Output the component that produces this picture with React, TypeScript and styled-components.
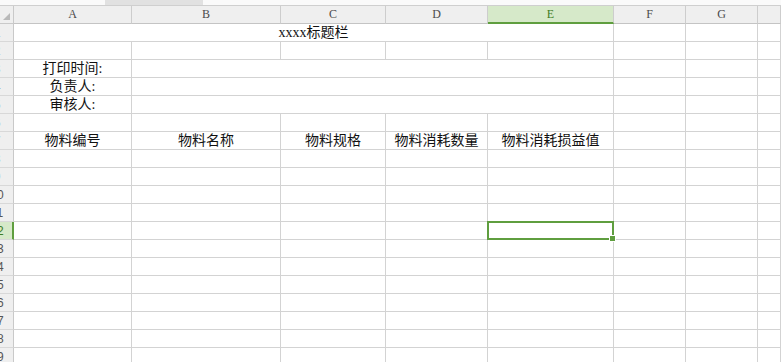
import styled, { createGlobalStyle, css } from "styled-components";

const GlobalStyle = createGlobalStyle`
  html, body {
    margin: 0;
    padding: 0;
    overflow: hidden;
    background: #ffffff;
  }
`;

// column boxes include their own right border
const COLUMN_WIDTHS = "14px 118px 149px 105px 102px 126px 72px 72px 1fr";
const LETTERS = ["A", "B", "C", "D", "E", "F", "G", "H"];
const ACTIVE_COL = "E";
const ACTIVE_ROW = 12;
const ROW_COUNT = 20;

const GRID = "#d3d3d3";
const GREEN = "#5f9e3f";
const GREEN_BG = "#d6e9c9";

interface CellDef {
  text?: string;
  span?: number;
}

// sheet contents, one entry per row, columns A..H
const CONTENT: Record<number, CellDef[]> = {
  1: [{ text: "xxxx标题栏", span: 5 }, {}, {}, {}],
  3: [{ text: "打印时间:" }, { span: 4 }, {}, {}, {}],
  4: [{ text: "负责人:" }, { span: 4 }, {}, {}, {}],
  5: [{ text: "审核人:" }, { span: 4 }, {}, {}, {}],
  7: [
    { text: "物料编号" },
    { text: "物料名称" },
    { text: "物料规格" },
    { text: "物料消耗数量" },
    { text: "物料消耗损益值" },
    {},
    {},
    {},
  ],
};

const emptyRow = (): CellDef[] => LETTERS.map(() => ({}));

const Sheet = styled.div`
  display: flex;
  flex-direction: column;
  width: 781px;
  height: 362px;
  overflow: hidden;
  background: #fff;
`;

const TopStrip = styled.div`
  flex: none;
  display: flex;
  height: 5px;
  border-bottom: 1px solid #cfcfcf;
  background: #fafafa;
`;

const Tab = styled.div`
  width: 98px;
  margin-left: 105px;
  background: #e1e1e1;
`;

const Grid = styled.div`
  flex: none;
  display: grid;
  grid-template-columns: ${COLUMN_WIDTHS};
  grid-auto-rows: 18px;
`;

const Corner = styled.div`
  display: flex;
  align-items: flex-end;
  justify-content: flex-end;
  padding: 0 3px 3px 0;
  box-sizing: border-box;
  background: #efefef;
  border-right: 1px solid #c9c9c9;
  border-bottom: 1px solid #c9c9c9;
`;

const CornerMark = styled.span`
  width: 0;
  height: 0;
  border-left: 7px solid transparent;
  border-bottom: 7px solid #b9b9b9;
`;

const ColHead = styled.div<{ $active?: boolean }>`
  display: flex;
  align-items: center;
  justify-content: center;
  box-sizing: border-box;
  background: #efefef;
  border-right: 1px solid #cdcdcd;
  border-bottom: 1px solid #c4c4c4;
  color: #4a4a4a;
  font-family: "Liberation Serif", serif;
  font-size: 12px;

  ${({ $active }) =>
    $active &&
    css`
      background: ${GREEN_BG};
      color: #3f7d26;
      border-bottom: 2px solid ${GREEN};
    `}
`;

const RowHead = styled.div<{ $active?: boolean }>`
  display: flex;
  align-items: center;
  overflow: hidden;
  box-sizing: border-box;
  background: #efefef;
  border-right: 1px solid #c9c9c9;
  border-bottom: 1px solid #d8d8d8;
  color: #555;
  font-family: "Liberation Sans", sans-serif;
  font-size: 12px;

  ${({ $active }) =>
    $active &&
    css`
      background: ${GREEN_BG};
      color: #3f7d26;
      border-right: 2px solid ${GREEN};
    `}
`;

// the row header is scrolled partly out of view on the left
const RowNumber = styled.span`
  flex: none;
  width: 30px;
  margin-left: -18px;
  text-align: center;
`;

const Cell = styled.div<{ $span: number; $selected?: boolean }>`
  position: relative;
  grid-column: span ${({ $span }) => $span};
  display: flex;
  align-items: center;
  justify-content: center;
  box-sizing: border-box;
  border-right: 1px solid ${GRID};
  border-bottom: 1px solid ${GRID};
  color: #111;
  font-family: "Liberation Serif", "Noto Sans CJK SC", serif;
  font-size: 14px;
  line-height: 1;
  white-space: nowrap;
  padding-top: 1px;

  ${({ $selected }) =>
    $selected &&
    css`
      &::after {
        content: "";
        position: absolute;
        top: -1px;
        left: -1px;
        right: -1px;
        bottom: -1px;
        border: 2px solid ${GREEN};
      }
      &::before {
        content: "";
        position: absolute;
        right: -3px;
        bottom: -3px;
        width: 5px;
        height: 5px;
        background: ${GREEN};
        border: 1px solid #fff;
        z-index: 1;
      }
    `}
`;

export default function App() {
  const rows = Array.from({ length: ROW_COUNT }, (_, i) => i + 1);

  return (
    <>
      <GlobalStyle />
      <Sheet>
        <TopStrip>
          <Tab />
        </TopStrip>
        <Grid>
          <Corner>
            <CornerMark />
          </Corner>
          {LETTERS.map((l) => (
            <ColHead key={l} $active={l === ACTIVE_COL}>
              {l === "H" ? "" : l}
            </ColHead>
          ))}

          {rows.map((r) => {
            const cells = CONTENT[r] ?? emptyRow();
            let col = 0;
            return [
              <RowHead key={`h${r}`} $active={r === ACTIVE_ROW}>
                <RowNumber>{r}</RowNumber>
              </RowHead>,
              ...cells.map((c, i) => {
                const span = c.span ?? 1;
                const letter = LETTERS[col];
                col += span;
                return (
                  <Cell
                    key={`${r}-${i}`}
                    $span={span}
                    $selected={r === ACTIVE_ROW && letter === ACTIVE_COL}
                  >
                    {c.text}
                  </Cell>
                );
              }),
            ];
          })}
        </Grid>
      </Sheet>
    </>
  );
}
